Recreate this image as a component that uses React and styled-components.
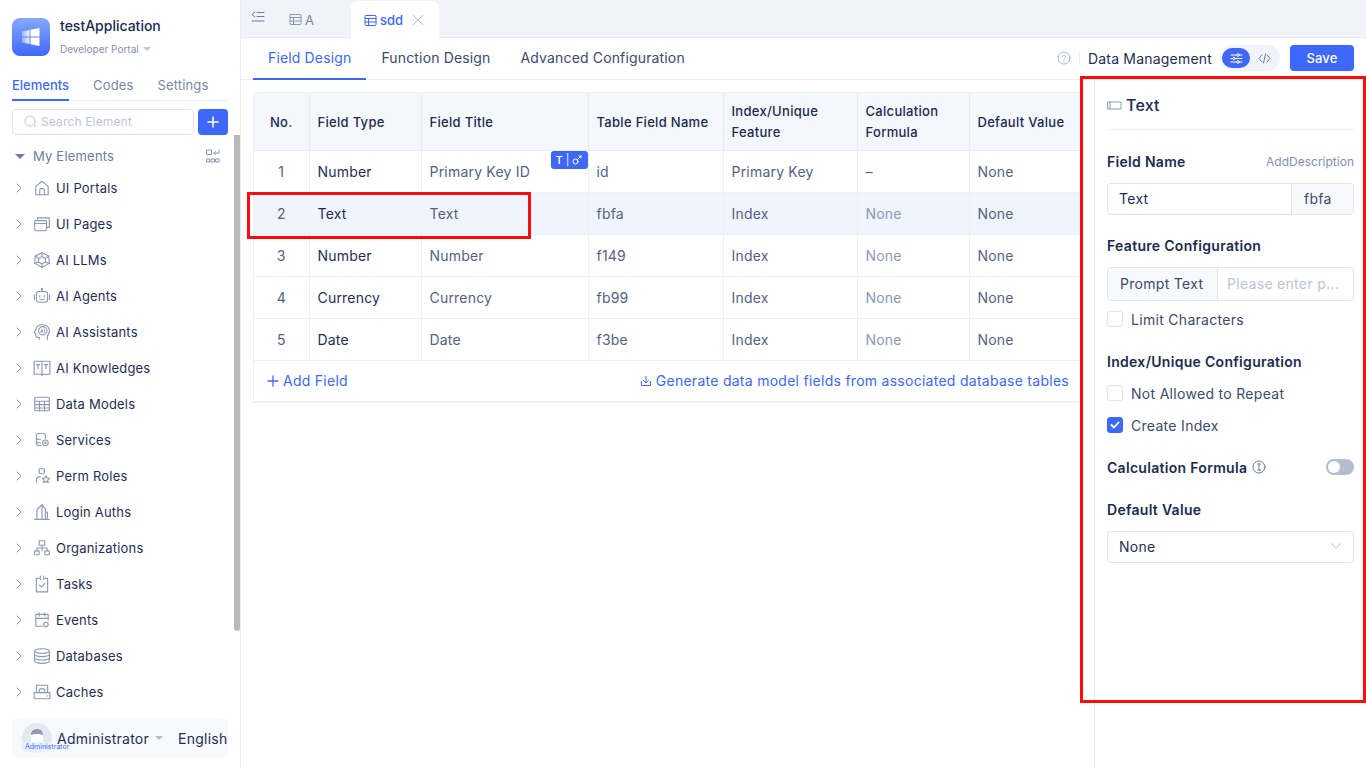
import React from "react";
import styled, { createGlobalStyle } from "styled-components";

const GlobalStyle = createGlobalStyle`
    html, body { margin: 0; padding: 0; height: 100%; background: #fff; overflow: hidden; }
    body { font-family: Inter, "Noto Sans", "Liberation Sans", sans-serif; color: #1c2b50; }
    * { box-sizing: border-box; }
`;

const Page = styled.div`
    display: flex;
    width: 1366px;
    height: 768px;
    position: relative;
    overflow: hidden;
`;

/* sidebar */
const Sidebar = styled.aside`
    width: 241px;
    flex: none;
    border-right: 1px solid #e8ecf4;
    display: flex;
    flex-direction: column;
    position: relative;
`;
const Brand = styled.div`
    display: flex;
    gap: 10px;
    padding: 18px 12px 0;
    height: 76px;
`;
const LogoBox = styled.div`
    width: 38px;
    height: 38px;
    border-radius: 8px;
    background: linear-gradient(180deg, #86a8fb, #3e68fa);
    display: flex;
    align-items: center;
    justify-content: center;
`;
const BrandText = styled.div`
    display: flex;
    flex-direction: column;
`;
const AppName = styled.div`
    font-size: 14px;
    font-weight: 500;
    line-height: 17px;
    color: #1c2b50;
    margin-top: -1px;
`;
const PortalName = styled.div`
    font-size: 10px;
    line-height: 12px;
    color: #8290ad;
    margin-top: 9px;
    display: flex;
    align-items: center;
    gap: 4px;
`;
const Caret = styled.span`
    width: 0;
    height: 0;
    margin-left: ${(p) => p.$gap || 0}px;
    border-left: ${(p) => p.$size || 4}px solid transparent;
    border-right: ${(p) => p.$size || 4}px solid transparent;
    border-top: ${(p) => p.$size || 4}px solid ${(p) => p.$color || "#c0c8d8"};
`;
const SideTabs = styled.div`
    display: flex;
    gap: 24px;
    margin: 0 12px;
    height: 25px;
    border-bottom: 1px solid #e8ecf4;
`;
const SideTab = styled.div`
    font-size: 13px;
    line-height: 18px;
    letter-spacing: ${(p) => (p.$active ? 0 : 0.15)}px;
    height: 25px;
    font-weight: ${(p) => (p.$active ? 500 : 400)};
    color: ${(p) => (p.$active ? "#3e68fa" : "#7b88a5")};
    border-bottom: 2px solid ${(p) => (p.$active ? "#3e68fa" : "transparent")};
`;
const SearchRow = styled.div`
    display: flex;
    gap: 4px;
    margin: 8px 12px 0;
`;
const SearchBox = styled.div`
    width: 182px;
    height: 26px;
    border: 1px solid #dfe4ee;
    border-radius: 4px;
    display: flex;
    align-items: center;
    gap: 4px;
    padding: 0 0 1px 11px;
    font-size: 12px;
    letter-spacing: 0.15px;
    color: #bcc5d6;
`;
const AddButton = styled.div`
    width: 30px;
    height: 26px;
    border-radius: 4px;
    background: #3e68fa;
    display: flex;
    align-items: center;
    justify-content: center;
`;
const TreeHead = styled.div`
    display: flex;
    align-items: center;
    height: 18px;
    margin: 12px 20px 0 15px;
    font-size: 13px;
    letter-spacing: 0.2px;
    color: #6f7d9c;
    gap: 8px;
`;
const TreeHeadLabel = styled.span`
    flex: 1;
`;
const TreeList = styled.div`
    margin-top: 5px;
    display: flex;
    flex-direction: column;
`;
const TreeRow = styled.div`
    height: 36px;
    display: flex;
    align-items: center;
    padding-left: 15px;
    font-size: 13px;
    letter-spacing: 0.2px;
    color: #1f2e55;
`;
const IconSlot = styled.span`
    width: 18px;
    height: 18px;
    margin: 0 5px 0 10px;
    display: flex;
    align-items: center;
    justify-content: center;
`;
const ScrollThumb = styled.div`
    position: absolute;
    left: 234px;
    top: 135px;
    width: 6px;
    height: 496px;
    background: #b9b9b9;
    border-radius: 0 0 3px 3px;
`;
const UserBar = styled.div`
    position: absolute;
    left: 12px;
    bottom: 10px;
    width: 216px;
    height: 40px;
    border-radius: 6px;
    background: #f7f9fc;
    display: flex;
    align-items: center;
    padding-left: 10px;
    font-size: 14px;
    letter-spacing: 0.25px;
    color: #1f2e55;
`;
const Avatar = styled.div`
    width: 30px;
    height: 30px;
    flex: none;
    border-radius: 50%;
    background: #e3e8f1;
    display: flex;
    align-items: center;
    justify-content: center;
    margin-right: 5px;
    padding-bottom: 6px;
`;
const AvatarTag = styled.span`
    position: absolute;
    left: 9px;
    top: 24px;
    width: 31px;
    height: 10px;
    padding-left: 4px;
    border-radius: 5px;
    background: #eaf0ff;
    font-size: 7px;
    line-height: 10px;
    letter-spacing: 0;
    color: #3e68fa;
    white-space: nowrap;
`;
const Lang = styled.span`
    margin-left: 15px;
    white-space: nowrap;
`;

/* main */
const Main = styled.main`
    flex: 1;
    min-width: 0;
    display: flex;
    flex-direction: column;
`;
const TabStrip = styled.div`
    height: 38px;
    flex: none;
    background: #f0f3fa;
    border-bottom: 1px solid #e6eaf2;
    display: flex;
    align-items: flex-start;
`;
const CollapseIcon = styled.span`
    width: 14px;
    height: 12px;
    margin: 11px 1px 0 10px;
    display: flex;
`;
const DocTab = styled.div`
    display: flex;
    align-items: center;
    gap: 3px;
    height: 37px;
    margin-top: 1px;
    font-size: 13px;
`;
const TabA = styled(DocTab)`
    width: 85px;
    padding-left: 23px;
    color: #7b88a5;
`;
const TabActive = styled(DocTab)`
    width: 88px;
    padding-left: 13px;
    background: #fff;
    border-radius: 6px 6px 0 0;
    color: #3e68fa;
    font-weight: 500;
    position: relative;
    z-index: 1;
    height: 38px;
`;
const TabClose = styled.span`
    margin-left: 6px;
    display: flex;
`;
const Toolbar = styled.div`
    height: 42px;
    flex: none;
    border-bottom: 1px solid #e8ecf4;
    display: flex;
    align-items: flex-start;
    padding: 0 12px;
`;
const MainTab = styled.div`
    height: 42px;
    padding: 0 15px;
    font-size: 14px;
    line-height: 40px;
    letter-spacing: 0.15px;
    color: ${(p) => (p.$active ? "#3e68fa" : "#3d4a6b")};
    border-bottom: 2px solid ${(p) => (p.$active ? "#3e68fa" : "transparent")};
`;
const ToolbarRight = styled.div`
    margin-left: auto;
    display: flex;
    align-items: center;
    height: 40px;
    font-size: 14px;
    letter-spacing: 0.2px;
    color: #1f2e55;
`;
const Divider = styled.span`
    width: 1px;
    height: 12px;
    background: #e8ecf4;
    margin: 0 8px;
`;
const ModeSwitch = styled.div`
    display: flex;
    align-items: center;
    width: 60px;
    height: 26px;
    border-radius: 13px;
    background: #f0f3fa;
    margin: 0 10px 0 8px;
    padding: 2px;
`;
const ModeOn = styled.span`
    width: 28px;
    height: 20px;
    border-radius: 10px;
    background: #3e68fa;
    display: flex;
    align-items: center;
    justify-content: center;
`;
const ModeOff = styled.span`
    width: 28px;
    display: flex;
    align-items: center;
    justify-content: center;
`;
const SaveButton = styled.div`
    width: 64px;
    height: 26px;
    background: #3e68fa;
    border-radius: 4px;
    color: #fff;
    font-size: 13px;
    font-weight: 500;
    text-align: center;
    line-height: 27px;
`;
const Body = styled.div`
    flex: 1;
    display: flex;
    min-height: 0;
`;
const Content = styled.div`
    flex: 1;
    min-width: 0;
    padding: 12px 12px 0;
    overflow: hidden;
`;

/* table */
const TableBox = styled.div`
    width: 830px;
    border: 1px solid #edf0f6;
    border-right: 0;
    border-radius: 4px 0 0 0;
`;
const Table = styled.table`
    border-collapse: collapse;
    table-layout: fixed;
    width: 829px;
    font-size: 14px;
    letter-spacing: 0.2px;
`;
const Th = styled.th`
    height: 57px;
    padding: 2px 8px 0;
    background: #f4f7fc;
    border-right: 1px solid #e8ecf4;
    border-bottom: 1px solid #e8ecf4;
    font-size: 13px;
    font-weight: 500;
    letter-spacing: 0.3px;
    line-height: 21px;
    text-align: ${(p) => (p.$center ? "center" : "left")};
    color: #1c2b50;
    &:last-child { border-right: 0; }
`;
const Td = styled.td`
    height: 42px;
    padding: 0 8px;
    border-right: 1px solid #edf0f6;
    border-bottom: 1px solid #edf0f6;
    text-align: ${(p) => (p.$center ? "center" : "left")};
    color: ${(p) => p.$color || "#55627f"};
    background: ${(p) => (p.$selected ? "#f0f4fd" : "#fff")};
    position: relative;
    white-space: nowrap;
    &:last-child { border-right: 0; }
`;
const KeyBadge = styled.span`
    position: absolute;
    right: 0;
    top: 0;
    width: 37px;
    height: 18px;
    background: #3e68fa;
    border-radius: 3px;
    color: #fff;
    font-size: 11px;
    font-weight: 500;
    letter-spacing: 0;
    display: flex;
    align-items: center;
    justify-content: center;
    gap: 3px;
`;
const BadgeBar = styled.span`
    font-weight: 400;
    opacity: 0.9;
`;
const TableFoot = styled.div`
    height: 41px;
    display: flex;
    align-items: center;
    justify-content: space-between;
    padding: 0 14px 0 13px;
    border-bottom: 1px solid #edf0f6;
    font-size: 14px;
    letter-spacing: 0.27px;
    color: #3e68fa;
`;
const FootLink = styled.span`
    display: flex;
    align-items: center;
    gap: 4px;
`;

/* right panel */
const Panel = styled.aside`
    width: 272px;
    flex: none;
    border-left: 1px solid #e8ecf4;
    padding: 0 12px;
    display: flex;
    flex-direction: column;
`;
const PanelTitle = styled.div`
    height: 50px;
    display: flex;
    align-items: center;
    gap: 4px;
    padding-top: 1px;
    border-bottom: 1px solid #eef1f6;
    font-size: 16px;
    font-weight: 500;
    letter-spacing: 0.2px;
`;
const SectionHead = styled.div`
    display: flex;
    align-items: center;
    height: 20px;
    font-size: 14px;
    font-weight: 600;
    letter-spacing: 0.3px;
    color: #1c2b50;
    margin-top: ${(p) => p.$top || 22}px;
`;
const AddDescription = styled.span`
    margin-left: auto;
    font-size: 12px;
    font-weight: 400;
    letter-spacing: 0;
    color: #8290ad;
`;
const FieldGroup = styled.div`
    display: flex;
    height: ${(p) => p.$height || 32}px;
    margin-top: 12px;
    border: 1px solid #dfe4ee;
    border-radius: 4px;
    font-size: 14px;
    letter-spacing: 0.3px;
    overflow: hidden;
`;
const FieldInput = styled.div`
    flex: 1;
    min-width: 0;
    padding: 0 0 2px ${(p) => p.$pad || 11}px;
    display: flex;
    align-items: center;
    white-space: nowrap;
    color: ${(p) => p.$color || "#1f2e55"};
`;
const FieldAddon = styled.div`
    width: ${(p) => p.$width}px;
    flex: none;
    padding: 0 0 1px 12px;
    display: flex;
    align-items: center;
    background: #f7f9fc;
    color: #3d4a6b;
    ${(p) => (p.$left ? "border-right" : "border-left")}: 1px solid #dfe4ee;
`;
const CheckRow = styled.div`
    display: flex;
    align-items: center;
    gap: 8px;
    height: 20px;
    margin-top: ${(p) => p.$top || 12}px;
    font-size: 14px;
    letter-spacing: 0.3px;
    color: #3d4a6b;
`;
const CheckBox = styled.span`
    width: 16px;
    height: 16px;
    border-radius: 3px;
    border: 1px solid ${(p) => (p.$on ? "#3e68fa" : "#dfe4ee")};
    background: ${(p) => (p.$on ? "#3e68fa" : "#fff")};
    display: flex;
    align-items: center;
    justify-content: center;
`;
const InfoIcon = styled.span`
    display: flex;
    margin-left: 5px;
`;
const Toggle = styled.span`
    margin-left: auto;
    width: 28px;
    height: 16px;
    border-radius: 8px;
    background: #b4bccd;
    padding: 2px;
    display: flex;
`;
const ToggleKnob = styled.span`
    width: 12px;
    height: 12px;
    border-radius: 50%;
    background: #fff;
`;
const SelectBox = styled.div`
    height: 32px;
    margin-top: 12px;
    border: 1px solid #dfe4ee;
    border-radius: 4px;
    padding: 0 11px 2px;
    display: flex;
    align-items: center;
    justify-content: space-between;
    font-size: 14px;
    letter-spacing: 0.3px;
    color: #1f2e55;
`;
const RedFrame = styled.div`
    position: absolute;
    left: ${(p) => p.$x}px;
    top: ${(p) => p.$y}px;
    width: ${(p) => p.$w}px;
    height: ${(p) => p.$h}px;
    border: 3px solid #fb0d0d;
    pointer-events: none;
    z-index: 5;
`;

const Stroke = ({ size = 16, w = 16, h = 16, color = "#8c99b3", sw = 1, children }) => (
    <svg width={size} height={(size * h) / w} viewBox={`0 0 ${w} ${h}`} fill="none" stroke={color} strokeWidth={sw} strokeLinecap="round" strokeLinejoin="round">
        {children}
    </svg>
);

const treeIcons = {
    home: <><path d="M2.500 6.500 8 2l5.500 4.500V14h-11z" /><path d="M6 14V9.500c0-.6.400-1 1-1h2c.6 0 1 .4 1 1V14" /></>,
    pages: <><rect x="1.500" y="5" width="10.500" height="9" rx=".8" /><path d="M1.500 7.500H12M4 5V2.500h10.500V11H12M4 2.500" /></>,
    cube: <><path d="M8 1.500 14 4.500l.5 6.500L8 14.500 1.500 11 2 4.500z" /><path d="M8 5 5 6.800v3L8 11.500l3-1.700v-3zM8 1.500V5M2 4.500l3 2.300M14 4.500l-3 2.300M8 14.500v-3M1.500 11 5 9.800M14.500 11 11 9.800" /></>,
    bot: <><rect x="3" y="4" width="10" height="9.500" rx="2.200" /><path d="M8 4V2.300M1.300 7v4M14.700 7v4M6 7.500v1.300M10 7.500v1.300M6.200 10.800c1 .7 2.600.7 3.600 0" /><circle cx="8" cy="1.700" r=".6" /></>,
    assistant: <><path d="M5.500 14.500V12.800H3.800c-.7 0-1.200-.5-1.200-1.200V9.800L1 8.500l1.600-2.700C3 3.300 5 1.500 8.500 1.500c3.500 0 6 2.300 6 5.500 0 2-.8 3.300-1.700 4.300v3.200" /><circle cx="8.700" cy="6.900" r="3.700" /><path d="M6.900 8.500 7.900 5.300l1 3.200M7.200 7.500h1.400M10.300 5.300v3.200" strokeWidth=".7" /></>,
    book: <><path d="M1 2h14v11.500H9l-1 1-1-1H1zM8 2v11.500" /><path d="M3 5h3M4.500 5v3.500M10 5h3M11.500 5v3.500" /></>,
    table: <><rect x="1.500" y="2" width="13" height="12" rx="1" /><path d="M1.500 5.500h13M1.500 8.500h13M1.500 11.500h13M5.800 5.500V14M10.200 5.500V14" /></>,
    services: <><path d="M3 3.500C3 2.700 4.500 2 7 2s4 .7 4 1.500v3M3 3.500v8c0 .8 1.500 1.500 4 1.500M3 6.300c0 .8 1.500 1.500 4 1.500M3 9c0 .8 1.500 1.500 3.500 1.500" /><circle cx="11" cy="10.500" r="2.500" /><circle cx="11" cy="10.500" r=".6" /></>,
    roles: <><rect x="5.500" y="1.500" width="4.500" height="4.500" rx=".8" /><path d="M3 13.500V11.500C3 9.800 4.500 8.500 6.500 8.500" /><path d="m11.500 7.800 1 2 2.200.3-1.600 1.500.4 2.200-2-1-2 1 .4-2.200-1.600-1.500 2.200-.3z" /></>,
    login: <><path d="M1.500 14.500h13M3.500 14.500V6L8 1.500v13M8 1.500 11 5.500v9M11 8h1.800v6.500" /></>,
    org: <><rect x="5.500" y="1.500" width="5" height="4" /><rect x="1.500" y="10.500" width="4" height="3.500" rx=".6" /><rect x="10.500" y="10.500" width="4" height="3.500" rx=".6" /><path d="M8 5.500V8M3.500 10.500V8h9v2.500M8 8v2.500" /></>,
    task: <><path d="M5.500 3H3v12h10V3h-2.500" /><path d="M6.500 1v3M9.500 1v3M5.800 9l1.700 1.800 3-3.300" /></>,
    events: <><path d="M8 13.500H2.500V3h11v5M2.500 6.500h11M5.500 1.500v3M10.500 1.500v3" /><circle cx="11.500" cy="12" r="2" /></>,
    db: <><ellipse cx="8" cy="3.500" rx="6.500" ry="2" /><path d="M1.500 3.500v9c0 1.100 2.900 2 6.500 2s6.500-.9 6.500-2v-9M1.500 6.500c0 1.100 2.900 2 6.500 2s6.500-.9 6.500-2M1.500 9.500c0 1.100 2.900 2 6.500 2s6.500-.9 6.500-2" /></>,
    cache: <><path d="M3 8.500V2h10v6.500M1 8.500h14V14H1z" /><path d="M5.500 8.500V6.500C5.500 5.500 6.500 5 8 5s2.500.5 2.500 1.500v2M12 11.500h.8" /></>,
};

const treeItems = [
    ["UI Portals", "home"],
    ["UI Pages", "pages"],
    ["AI LLMs", "cube"],
    ["AI Agents", "bot"],
    ["AI Assistants", "assistant"],
    ["AI Knowledges", "book"],
    ["Data Models", "table"],
    ["Services", "services"],
    ["Perm Roles", "roles"],
    ["Login Auths", "login"],
    ["Organizations", "org"],
    ["Tasks", "task"],
    ["Events", "events"],
    ["Databases", "db"],
    ["Caches", "cache"],
];

const columns = [55, 112, 167, 135, 134, 112, 114];

const rows = [
    ["1", "Number", "Primary Key ID", "id", "Primary Key", "–", "None"],
    ["2", "Text", "Text", "fbfa", "Index", "None", "None"],
    ["3", "Number", "Number", "f149", "Index", "None", "None"],
    ["4", "Currency", "Currency", "fb99", "Index", "None", "None"],
    ["5", "Date", "Date", "f3be", "Index", "None", "None"],
];

const Chevron = () => (
    <Stroke size={8} w={8} h={10} color="#8c99b3">
        <path d="M2 1l4 4-4 4" />
    </Stroke>
);

const TableIcon = ({ color }) => (
    <Stroke size={13} w={13} h={13} color={color}>
        <rect x="1" y="1.500" width="11" height="10" rx="1" />
        <path d="M1 4.500h11M1 8h11M4.500 4.500v7" />
    </Stroke>
);

const App = () => (
    <Page>
        <GlobalStyle />
        <Sidebar>
            <Brand>
                <LogoBox>
                    <svg width="20" height="20" viewBox="0 0 20 20">
                        <defs>
                            <linearGradient id="logoFade" x1="0" y1="0" x2="1" y2="0">
                                <stop offset="0" stopColor="#fff" stopOpacity="0.35" />
                                <stop offset="0.5" stopColor="#fff" stopOpacity="1" />
                            </linearGradient>
                        </defs>
                        <path fill="url(#logoFade)" d="M1 4.500 8.500 3v6.500H1zM9.500 2.800 18.500 1v8.500h-9zM1 10.500h7.500V17L1 15.500zM9.500 10.500h9V19l-9-1.800z" />
                    </svg>
                </LogoBox>
                <BrandText>
                    <AppName>testApplication</AppName>
                    <PortalName>
                        Developer Portal <Caret />
                    </PortalName>
                </BrandText>
            </Brand>
            <SideTabs>
                <SideTab $active>Elements</SideTab>
                <SideTab>Codes</SideTab>
                <SideTab>Settings</SideTab>
            </SideTabs>
            <SearchRow>
                <SearchBox>
                    <Stroke size={13} w={13} h={13} color="#bcc5d6">
                        <circle cx="6" cy="6" r="5" />
                        <path d="m10 10 2 2" />
                    </Stroke>
                    Search Element
                </SearchBox>
                <AddButton>
                    <Stroke size={12} w={12} h={12} color="#fff" sw={1.500}>
                        <path d="M6 1v10M1 6h10" />
                    </Stroke>
                </AddButton>
            </SearchRow>
            <TreeHead>
                <Caret $size={5} $color="#6f7d9c" />
                <TreeHeadLabel>My Elements</TreeHeadLabel>
                <Stroke size={14} w={14} h={14} color="#8c99b3">
                    <rect x="1" y="1" width="4.500" height="4.500" />
                    <path d="M8 4h5V1M8 4l1.500-1.500M8 4l1.500 1.500" />
                    <rect x="1" y="10" width="3" height="3" />
                    <rect x="5.500" y="10" width="3" height="3" />
                    <rect x="10" y="10" width="3" height="3" />
                </Stroke>
            </TreeHead>
            <TreeList>
                {treeItems.map(([label, icon]) => (
                    <TreeRow key={label}>
                        <Chevron />
                        <IconSlot>
                            <Stroke size={18}>{treeIcons[icon]}</Stroke>
                        </IconSlot>
                        {label}
                    </TreeRow>
                ))}
            </TreeList>
            <ScrollThumb />
            <UserBar>
                <Avatar>
                    <svg width="14" height="14" viewBox="0 0 14 14" fill="#fff">
                        <path d="M1 14V6c0-3 2.500-5 6-5s6 2 6 5v8z" />
                        <path d="M1 7c0-4 2.500-6 6-6s6 2 6 6c-2-1.500-10-1.500-12 0z" fill="#8f9ab0" />
                    </svg>
                </Avatar>
                <AvatarTag>Administrator</AvatarTag>
                Administrator
                <Caret $color="#b4bccd" $gap={6} />
                <Lang>English</Lang>
            </UserBar>
        </Sidebar>
        <Main>
            <TabStrip>
                <CollapseIcon>
                    <Stroke size={14} w={14} h={12} color="#6f7d9c">
                        <path d="M6 1.500h7M4 1 1 3.500 4 6M6 5.500h7M1 10h12" />
                    </Stroke>
                </CollapseIcon>
                <TabA>
                    <TableIcon color="#8c99b3" /> A
                </TabA>
                <TabActive>
                    <TableIcon color="#3e68fa" /> sdd
                    <TabClose>
                        <Stroke size={12} w={12} h={12} color="#a9b4c8">
                            <path d="M1.500 1.500l9 9M10.500 1.500l-9 9" />
                        </Stroke>
                    </TabClose>
                </TabActive>
            </TabStrip>
            <Toolbar>
                <MainTab $active>Field Design</MainTab>
                <MainTab>Function Design</MainTab>
                <MainTab>Advanced Configuration</MainTab>
                <ToolbarRight>
                    <Stroke size={14} w={14} h={14} color="#a9b4c8">
                        <circle cx="7" cy="7" r="6" />
                        <path d="M5.300 5.500C5.300 4.500 6 4 7 4s1.700.6 1.700 1.500C8.700 6.800 7 6.800 7 8.300M7 10.200v.3" />
                    </Stroke>
                    <Divider />
                    Data Management
                    <ModeSwitch>
                        <ModeOn>
                            <Stroke size={13} w={13} h={13} color="#fff">
                                <path d="M1 3h11M1 6.500h11M1 10h11" />
                                <circle cx="8" cy="3" r="1.300" fill="#3e68fa" />
                                <circle cx="4" cy="6.500" r="1.300" fill="#3e68fa" />
                                <circle cx="8" cy="10" r="1.300" fill="#3e68fa" />
                            </Stroke>
                        </ModeOn>
                        <ModeOff>
                            <Stroke size={13} w={13} h={13} color="#6f7d9c">
                                <path d="M4 3 1 6.500 4 10M9 3l3 3.500L9 10M7.500 2 5.500 11" />
                            </Stroke>
                        </ModeOff>
                    </ModeSwitch>
                    <SaveButton>Save</SaveButton>
                </ToolbarRight>
            </Toolbar>
            <Body>
                <Content>
                    <TableBox>
                        <Table>
                            <colgroup>
                                {columns.map((w, i) => (
                                    <col key={i} style={{ width: w }} />
                                ))}
                            </colgroup>
                            <thead>
                                <tr>
                                    <Th $center>No.</Th>
                                    <Th>Field Type</Th>
                                    <Th>Field Title</Th>
                                    <Th>Table Field Name</Th>
                                    <Th>
                                        Index/Unique
                                        <br />
                                        Feature
                                    </Th>
                                    <Th>
                                        Calculation
                                        <br />
                                        Formula
                                    </Th>
                                    <Th>Default Value</Th>
                                </tr>
                            </thead>
                            <tbody>
                                {rows.map((row, r) => (
                                    <tr key={row[0]}>
                                        {row.map((cell, c) => (
                                            <Td
                                                key={c}
                                                $center={c === 0}
                                                $selected={r === 1}
                                                $color={c === 1 ? "#1f2e55" : c === 5 && r > 0 ? "#8c99b3" : undefined}
                                            >
                                                {cell}
                                                {r === 0 && c === 2 && (
                                                    <KeyBadge>
                                                        T <BadgeBar>|</BadgeBar>
                                                        <Stroke size={10} w={10} h={10} color="#fff">
                                                            <circle cx="3.500" cy="6.500" r="2.500" />
                                                            <path d="M5.500 4.500 9 1M7 1h2v2" />
                                                        </Stroke>
                                                    </KeyBadge>
                                                )}
                                            </Td>
                                        ))}
                                    </tr>
                                ))}
                            </tbody>
                        </Table>
                        <TableFoot>
                            <FootLink>
                                <Stroke size={12} w={12} h={12} color="#3e68fa" sw={1.300}>
                                    <path d="M6 1v10M1 6h10" />
                                </Stroke>
                                Add Field
                            </FootLink>
                            <FootLink>
                                <Stroke size={12} w={12} h={12} color="#3e68fa">
                                    <path d="M6 1.500v6M3.500 5.500 6 8l2.500-2.500M1.500 6.500V10.500h9V6.500" />
                                </Stroke>
                                Generate data model fields from associated database tables
                            </FootLink>
                        </TableFoot>
                    </TableBox>
                </Content>
                <Panel>
                    <PanelTitle>
                        <Stroke size={15} w={15} h={15} color="#8c99b3">
                            <rect x="1" y="4" width="13" height="7" />
                            <path d="M3 4v7" />
                        </Stroke>
                        Text
                    </PanelTitle>
                    <SectionHead $top={21}>
                        Field Name
                        <AddDescription>AddDescription</AddDescription>
                    </SectionHead>
                    <FieldGroup>
                        <FieldInput>Text</FieldInput>
                        <FieldAddon $width={62}>fbfa</FieldAddon>
                    </FieldGroup>
                    <SectionHead $top={20}>Feature Configuration</SectionHead>
                    <FieldGroup $height={34}>
                        <FieldAddon $width={110} $left>
                            Prompt Text
                        </FieldAddon>
                        <FieldInput $color="#bcc5d6" $pad={9}>
                            Please enter p...
                        </FieldInput>
                    </FieldGroup>
                    <CheckRow $top={8}>
                        <CheckBox />
                        Limit Characters
                    </CheckRow>
                    <SectionHead>Index/Unique Configuration</SectionHead>
                    <CheckRow>
                        <CheckBox />
                        Not Allowed to Repeat
                    </CheckRow>
                    <CheckRow>
                        <CheckBox $on>
                            <Stroke size={10} w={10} h={10} color="#fff" sw={1.800}>
                                <path d="M1.500 5 4 7.500 8.500 2.500" />
                            </Stroke>
                        </CheckBox>
                        Create Index
                    </CheckRow>
                    <SectionHead>
                        Calculation Formula
                        <InfoIcon>
                            <Stroke size={14} w={14} h={14} color="#6f7d9c">
                                <circle cx="7" cy="7" r="6" />
                                <path d="M5.500 4h3M7 4v6M5.500 10h3" />
                            </Stroke>
                        </InfoIcon>
                        <Toggle>
                            <ToggleKnob />
                        </Toggle>
                    </SectionHead>
                    <SectionHead>Default Value</SectionHead>
                    <SelectBox>
                        None
                        <Stroke size={12} w={12} h={12} color="#b4bccd">
                            <path d="M1.500 3.500 6 8.500l4.500-5" />
                        </Stroke>
                    </SelectBox>
                </Panel>
            </Body>
        </Main>
        <RedFrame $x={247} $y={192} $w={284} $h={47} />
        <RedFrame $x={1080} $y={76} $w={286} $h={627} />
    </Page>
);

export default App;
